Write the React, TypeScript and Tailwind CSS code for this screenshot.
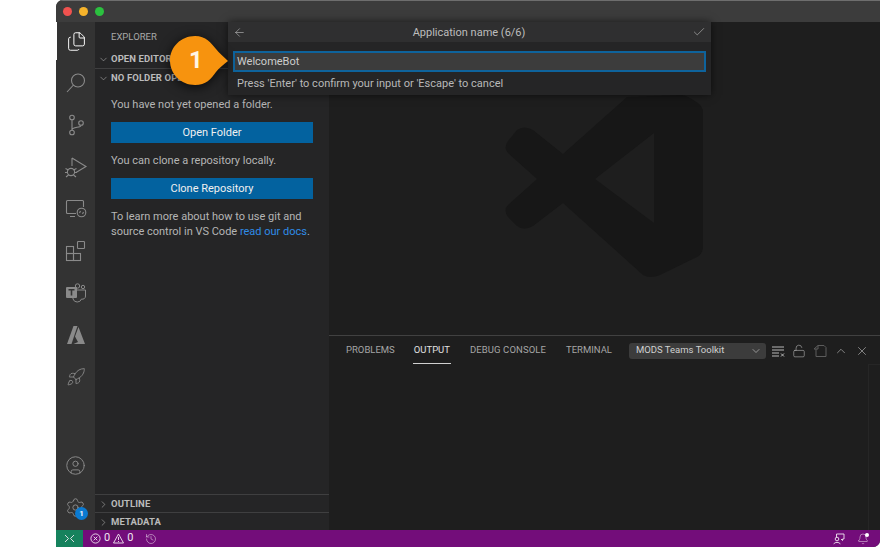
import React from 'react'
import { ArrowLeft, Bell, Check, ChevronDown, ChevronRight, ChevronUp, CircleUser, Files, History, LockOpen, Rocket, Settings, X } from 'lucide-react'

const font = { fontFamily: 'Roboto, "Liberation Sans", sans-serif' }

const Watermark = () => (
    <svg className="absolute left-0 top-0" width="551" height="313" viewBox="329 22 551 313">
        <path
            fill="#171717"
            fillRule="evenodd"
            d="M627 97 L680 95 Q686 95 690 98 L698 103 Q703 107 703 112 L703 246 Q703 254 697 257 L660 275 Q650 279 643 275 L563 203 L533 226 Q524 231 517 226 L508 217 Q503 210 508 205 L537 179 L508 153 Q503 148 508 141 L517 130 Q524 125 533 130 L563 154 Z M654 133 L595 179 L654 223 Z"
        />
    </svg>
)

const Callout = () => (
    <div className="absolute left-[112px] top-[13px] h-[50px] w-[62px]">
        <svg width="62" height="50" viewBox="0 0 62 50" className="drop-shadow-[0_2px_6px_rgba(0,0,0,0.75)]">
            <path
                fill="#f7930e"
                d="M27 1 C38 1 43 8 48 14 C51 18 56 22 60 26 C56 29 51 33 48 37 C43 44 38 50 27 50 C13 50 2 39 2 25.5 C2 12 13 1 27 1 Z"
            />
        </svg>
        <span className="absolute left-[21px] top-[10px] text-[24px] font-bold leading-[30px] text-[#fff5e6]">1</span>
    </div>
)

const QuickInput = () => (
    <div className="absolute left-[172px] top-0 w-[483px] bg-[#252526] shadow-[0_0_8px_rgba(0,0,0,0.6)]">
        <div className="flex h-[20px] items-center justify-between bg-[#2f2f30] pl-[5px] pr-[5px]">
            <ArrowLeft size={13} strokeWidth={1} color="#d0d0d0" />
            <span className="pt-[2px] text-[11px] text-[#bdbdbd]">Application name (6/6)</span>
            <Check size={14} strokeWidth={1} color="#c5c5c5" />
        </div>
        <div className="px-[5px] pt-[9px]">
            <div className="flex h-[21px] items-center border-2 border-[#0e639c] bg-[#3c3c3c] px-[2px] pt-[1px] text-[11px] text-[#cccccc]">
                WelcomeBot
            </div>
        </div>
        <div className="flex h-[23px] items-center px-[9px] pt-[1px] text-[11px] text-[#b8b8b8]">
            Press 'Enter' to confirm your input or 'Escape' to cancel
        </div>
    </div>
)

const ActivityBar = () => (
    <div className="flex w-[39px] shrink-0 flex-col items-center bg-[#333333] text-[#8a8a8a]">
        <div className="mb-[2px] flex h-[38px] w-full items-center justify-center border-l-[1.5px] border-white text-white">
            <Files size={21} strokeWidth={1.1} />
        </div>
        <div className="flex h-[42px] items-center justify-center">
            <svg width="22" height="22" viewBox="0 0 22 22" fill="none" stroke="currentColor" strokeWidth="1.1">
                <circle cx="13" cy="8.5" r="6.5" />
                <path d="M8.5 13 L2 20" />
            </svg>
        </div>
        <div className="flex h-[42px] items-center justify-center">
            <svg width="22" height="22" viewBox="0 0 22 22" fill="none" stroke="currentColor" strokeWidth="1.1">
                <circle cx="7" cy="3.5" r="2.3" />
                <circle cx="7" cy="18.5" r="2.3" />
                <circle cx="16" cy="9" r="2.3" />
                <path d="M7 6 V16 M16 11.5 C16 14 7 12.5 7 16" />
            </svg>
        </div>
        <div className="flex h-[42px] items-center justify-center">
            <svg width="24" height="24" viewBox="0 0 24 24" fill="none" stroke="currentColor" strokeWidth="1.1">
                <path d="M8 3 L22 11.5 L12 17.5 M8 3 V11" />
                <circle cx="7" cy="17" r="3.6" />
                <path d="M1.5 13.5 L4.5 15 M12.5 13.5 L9.5 15 M1 17.5 H3.5 M10.5 17.5 H13 M2 22 L4.5 20 M12 22 L9.5 20" />
            </svg>
        </div>
        <div className="flex h-[42px] items-center justify-center">
            <svg width="22" height="22" viewBox="0 0 22 22" fill="none" stroke="currentColor" strokeWidth="1.1">
                <path d="M11 15.5 H2.5 Q1.5 15.5 1.5 14.5 V3.5 Q1.5 2.5 2.5 2.5 H17.5 Q18.5 2.5 18.5 3.5 V9" />
                <path d="M5 18.5 H10" />
                <circle cx="16.5" cy="14.5" r="4.3" />
                <path d="M15.5 13 L14.5 15 M18.5 14 L17.5 16" />
            </svg>
        </div>
        <div className="flex h-[42px] items-center justify-center">
            <svg width="22" height="22" viewBox="0 0 22 22" fill="none" stroke="currentColor" strokeWidth="1.1">
                <rect x="1.5" y="6.5" width="7" height="7" />
                <rect x="1.5" y="13.5" width="7" height="7" />
                <rect x="8.5" y="13.5" width="7" height="7" />
                <rect x="12.5" y="1.5" width="7" height="7" rx="0.8" />
            </svg>
        </div>
        <div className="flex h-[42px] items-center justify-center">
            <svg width="22" height="22" viewBox="0 0 22 22" fill="none" stroke="currentColor" strokeWidth="1">
                <circle cx="12.5" cy="4" r="2.2" />
                <circle cx="18" cy="5" r="1.7" />
                <path d="M11 8 H20.5 V14 A3 3 0 0 1 16.5 17 A4.5 4.5 0 0 1 8 17 V15" />
                <rect x="1" y="5" width="11" height="11" rx="1" fill="currentColor" stroke="none" />
                <path d="M3.5 7.8 H9.5 M6.5 7.8 V13.5" stroke="#333333" strokeWidth="1.6" />
            </svg>
        </div>
        <div className="flex h-[42px] items-center justify-center">
            <svg width="18" height="18" viewBox="0 0 18 18" fill="currentColor">
                <path d="M6.5 0 H10.5 L4.5 18 H0 Z" />
                <path d="M11.5 1 L18 18 H6.5 L11 16 L8 10.5 Z" />
            </svg>
        </div>
        <div className="flex h-[42px] items-center justify-center">
            <Rocket size={20} strokeWidth={1.1} />
        </div>
        <div className="flex-1" />
        <div className="flex h-[42px] items-center justify-center">
            <CircleUser size={21} strokeWidth={1.1} />
        </div>
        <div className="relative mb-[1px] flex h-[43px] items-center justify-center">
            <Settings size={21} strokeWidth={1.1} />
            <span className="absolute left-[10px] top-[21px] flex h-[13px] w-[13px] items-center justify-center rounded-full bg-[#0b7ad1] text-[8px] font-semibold text-white">
                1
            </span>
        </div>
    </div>
)

const SectionHeader = ({ label, open, border }: { label: string; open?: boolean; border?: boolean }) => (
    <div className={`flex h-[18px] items-center gap-[2px] pl-[3px] pt-[1px] text-[9.5px] font-bold text-[#bbbbbb] ${border ? 'border-t border-[#3f3f40]' : ''}`}>
        {open ? <ChevronDown size={11} strokeWidth={1.2} /> : <ChevronRight size={11} strokeWidth={1.2} />}
        <span className="tracking-[0.1px]">{label}</span>
    </div>
)

const Sidebar = () => (
    <div className="flex w-[234px] shrink-0 flex-col bg-[#252526] text-[11px] text-[#b5b5b5]">
        <div className="flex h-[28px] items-center pl-[16px] pt-[2px] text-[9.5px] text-[#a9a9a9]">EXPLORER</div>
        <SectionHeader label="OPEN EDITORS" open />
        <SectionHeader label="NO FOLDER OPENED" open border />
        <div className="flex flex-col px-[16px] pt-[10px]">
            <p className="h-[17px] leading-[17px]">You have not yet opened a folder.</p>
            <button className="mt-[9px] h-[21px] bg-[#03629f] pt-[1px] text-[#f0f0f0]">Open Folder</button>
            <p className="mt-[9px] h-[17px] leading-[17px]">You can clone a repository locally.</p>
            <button className="mt-[9px] h-[21px] bg-[#03629f] pt-[1px] text-[#f0f0f0]">Clone Repository</button>
            <p className="mt-[11px] leading-[14.5px]">
                To learn more about how to use git and source control in VS Code <span className="text-[#2f8ce6]">read our docs</span>.
            </p>
        </div>
        <div className="flex-1" />
        <SectionHeader label="OUTLINE" border />
        <SectionHeader label="METADATA" border />
    </div>
)

const Panel = () => (
    <div className="flex h-[195px] shrink-0 flex-col border-t border-[#414141] bg-[#1e1e1e]">
        <div className="flex h-[28px] shrink-0 items-center whitespace-nowrap pl-[17px] pt-[1px] text-[9.5px] text-[#a5a5a5]">
            <span>PROBLEMS</span>
            <span className="relative ml-[19px] text-[#e0e0e0]">
                OUTPUT
                <span className="absolute -bottom-[6px] -left-px -right-px h-px bg-[#d0d0d0]" />
            </span>
            <span className="ml-[20px] tracking-[0.1px]">DEBUG CONSOLE</span>
            <span className="ml-[20px]">TERMINAL</span>
            <div className="ml-[17px] flex h-[16px] w-[137px] items-center justify-between rounded-[3px] bg-[#3c3c3c] pl-[7px] pr-[4px] text-[#d0d0d0]">
                MODS Teams Toolkit
                <ChevronDown size={12} strokeWidth={1.2} />
            </div>
            <div className="ml-[5px] flex items-center gap-[7px] text-[#b8b8b8]">
                <svg width="14" height="14" viewBox="0 0 14 14" fill="none" stroke="currentColor" strokeWidth="1">
                    <path d="M1 3 H13 M1 6 H13 M1 9 H8 M1 12 H8 M10 9.5 L13 12.5 M13 9.5 L10 12.5" />
                </svg>
                <LockOpen size={14} strokeWidth={1} />
                <svg width="14" height="14" viewBox="0 0 14 14" fill="none" stroke="#5c5c5c" strokeWidth="1">
                    <path d="M5 1.5 H11 L13 3.5 V12.5 H3 V5 L1 5 L5 1.5 Z M5 1.5 V5 H3" />
                </svg>
                <ChevronUp size={14} strokeWidth={1.1} />
                <X size={14} strokeWidth={1.1} />
            </div>
        </div>
        <div className="flex flex-1 justify-end">
            <div className="w-[12px] border-l border-t border-[#262626]" />
        </div>
    </div>
)

const StatusBar = () => (
    <div className="flex h-[17px] shrink-0 items-center bg-[#730d7a] pr-[11px] text-[11px] text-[#f0e6f1]">
        <div className="flex h-full w-[27px] items-center justify-center bg-[#16825d]">
            <svg width="11" height="11" viewBox="0 0 11 11" fill="none" stroke="currentColor" strokeWidth="0.9">
                <path d="M1 2 L4.5 5.5 L1 9 M10 2 L6.5 5.5 L10 9" />
            </svg>
        </div>
        <svg className="ml-[7px]" width="11" height="11" viewBox="0 0 11 11" fill="none" stroke="currentColor" strokeWidth="0.9">
            <circle cx="5.5" cy="5.5" r="4.6" />
            <path d="M3.7 3.7 L7.3 7.3 M7.3 3.7 L3.7 7.3" />
        </svg>
        <span className="ml-[3px]">0</span>
        <svg className="ml-[3px]" width="11" height="11" viewBox="0 0 11 11" fill="none" stroke="currentColor" strokeWidth="0.9">
            <path d="M5.5 1 L10.5 10 H0.5 Z M5.5 4 V7 M5.5 8 V9" />
        </svg>
        <span className="ml-[3px]">0</span>
        <History className="ml-[12px]" size={12} strokeWidth={1} />
        <div className="flex-1" />
        <svg width="12" height="12" viewBox="0 0 12 12" fill="none" stroke="currentColor" strokeWidth="0.9">
            <path d="M3.5 4.5 V1 H11 V6 L9.5 6 L9.5 7.5 L8 6" />
            <circle cx="4" cy="6" r="1.8" />
            <path d="M0.8 11.2 C1.2 8.8 6.8 8.8 7.2 11.2" />
        </svg>
        <div className="relative ml-[12px]">
            <Bell size={12} strokeWidth={1} />
            <span className="absolute right-0 top-0 h-[4px] w-[4px] rounded-full bg-white" />
        </div>
    </div>
)

const App = () => {
    return (
        <div className="flex h-[547px] w-[880px] overflow-hidden bg-white pl-[56px]" style={font}>
            <div className="flex flex-1 flex-col overflow-hidden rounded-tl-[7px] rounded-br-[7px] bg-[#1e1e1e]">
                {/* Title bar */}
                <div className="flex h-[22px] shrink-0 items-center gap-[7px] border-t border-[#6e6e6e] bg-[#3c3c3c] pl-[7px]">
                    <span className="h-[9px] w-[9px] rounded-full bg-[#f0524f]" />
                    <span className="h-[9px] w-[9px] rounded-full bg-[#f5b32b]" />
                    <span className="h-[9px] w-[9px] rounded-full bg-[#2bc13f]" />
                </div>

                <div className="relative flex min-h-0 flex-1">
                    <ActivityBar />
                    <Sidebar />
                    <div className="flex flex-1 flex-col">
                        <div className="relative flex-1 bg-[#1e1e1e]">
                            <Watermark />
                        </div>
                        <Panel />
                    </div>
                    <QuickInput />
                    <Callout />
                </div>

                <StatusBar />
            </div>
        </div>
    )
}

export default App
